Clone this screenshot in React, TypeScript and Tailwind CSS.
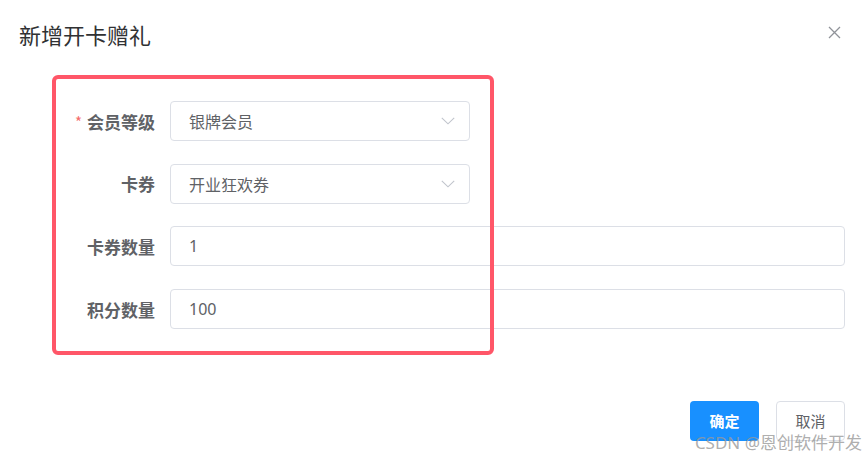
import React from 'react';

const FONT = { fontFamily: '"Noto Sans CJK SC", "Noto Sans", sans-serif' };

function Chevron() {
  return (
    <svg width="14" height="8" viewBox="0 0 14 8" fill="none">
      <path d="M0.8 0.8 L7 6.8 L13.2 0.8" stroke="#c0c4cc" strokeWidth="1.1" />
    </svg>
  );
}

function Row({
  label,
  required,
  children,
}: {
  label: string;
  required?: boolean;
  children: React.ReactNode;
}) {
  return (
    <div className="flex items-center">
      <div className="w-[135px] flex justify-end items-center text-[17px] font-bold text-[#606266] leading-none">
        {required && <span className="text-[#f56c6c] text-[15px] mr-[5px] font-normal">*</span>}
        {label}
      </div>
      <div className="ml-[15px] flex-1">{children}</div>
    </div>
  );
}

function SelectBox({ value }: { value: string }) {
  return (
    <div className="w-[300px] h-[40px] rounded-[4px] border border-[#dcdfe6] bg-white flex items-center justify-between pl-[18px] pr-[14px]">
      <span className="text-[16px] text-[#606266]">{value}</span>
      <Chevron />
    </div>
  );
}

function InputBox({ value }: { value: string }) {
  return (
    <div className="h-[40px] rounded-[4px] border border-[#dcdfe6] bg-white flex items-center pl-[18px]">
      <span className="text-[16px] text-[#606266]" style={{ fontFamily: '"Noto Sans", "Noto Sans CJK SC", sans-serif' }}>
        {value}
      </span>
    </div>
  );
}

export default function App() {
  return (
    <div className="relative w-[867px] h-[458px] bg-white overflow-hidden" style={FONT}>
      {/* Header */}
      <div className="flex items-start justify-between pl-[19px] pr-[26px] pt-[18px]">
        <h2 className="text-[22px] leading-[33px] text-[#303133]">新增开卡赠礼</h2>
        <svg className="mt-[8px]" width="13" height="13" viewBox="0 0 13 13" fill="none">
          <path d="M1 1 L12 12 M12 1 L1 12" stroke="#909399" strokeWidth="1.3" />
        </svg>
      </div>

      {/* Form */}
      <div className="mt-[50px] pl-[20px] pr-[22px] flex flex-col gap-[22.7px]">
        <Row label="会员等级" required>
          <SelectBox value="银牌会员" />
        </Row>
        <Row label="卡券">
          <SelectBox value="开业狂欢券" />
        </Row>
        <Row label="卡券数量">
          <InputBox value="1" />
        </Row>
        <Row label="积分数量">
          <InputBox value="100" />
        </Row>
      </div>

      {/* Footer */}
      <div className="mt-[72px] pr-[22px] flex justify-end gap-[17px]">
        <button className="w-[69px] h-[40px] rounded-[4px] bg-[#1890ff] text-white text-[15px] font-bold">
          确定
        </button>
        <button className="w-[69px] h-[40px] rounded-[4px] border border-[#dcdfe6] bg-white text-[#606266] text-[15px]">
          取消
        </button>
      </div>

      {/* Annotation box */}
      <div className="absolute left-[52px] top-[75px] w-[442px] h-[280px] border-[4px] border-[#ff5668] rounded-[6px] pointer-events-none" />

      {/* Watermark */}
      <div className="absolute right-[5px] bottom-[3px] text-[17px] leading-[24px] text-[#999999]/80 pointer-events-none" style={{ fontFamily: '"Noto Sans", "Noto Sans CJK SC", sans-serif' }}>
        CSDN @恩创软件开发
      </div>
    </div>
  );
}
